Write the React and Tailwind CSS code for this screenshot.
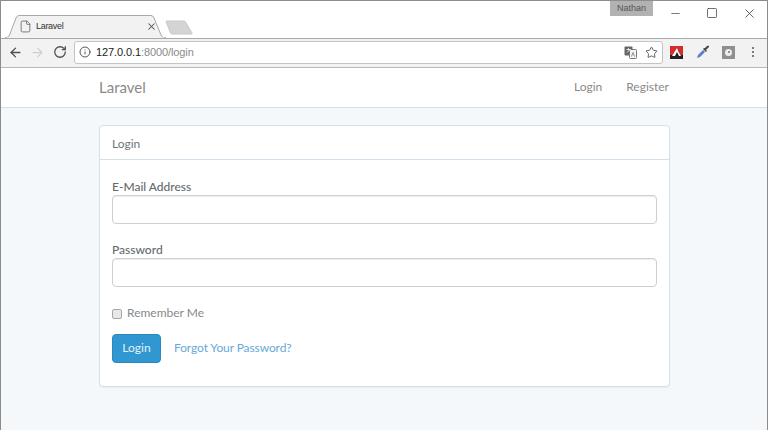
import React from 'react';
import { ArrowLeft, ArrowRight, RotateCw, Info, Star, X, Minus, Square, File } from 'lucide-react';

const font = "font-['Lato','Open_Sans',sans-serif]";

const TabStrip = () => (
  <div className="h-[37px] flex items-end relative bg-white">
    <div className="relative w-[161px] h-[23px] ml-[4px] flex items-center pl-[14px] pr-[9px]">
      <svg className="absolute left-0 top-0" width="161" height="23" viewBox="0 0 161 23" fill="none">
        <path d="M0 22.5 H2 Q3.5 22.5 4.5 20 L11 3 Q12 0.5 14 0.5 H146 Q148 0.5 149 3 L156 20 Q157 22.5 158.5 22.5 H161" fill="#f2f2f2" stroke="#a8a8a8" />
        <path d="M1 23 H160" stroke="#f2f2f2" />
      </svg>
      <File size={13} strokeWidth={1.5} className="relative text-[#5f6368]" />
      <span className="relative ml-[4px] text-[9px] tracking-[-0.3px] leading-none text-[#333] font-['Liberation_Sans',sans-serif]">Laravel</span>
      <X size={11} strokeWidth={2.2} className="relative ml-auto text-[#555]" />
    </div>
    <svg className="ml-[-1px] mb-[3px]" width="29" height="15" viewBox="0 0 29 15">
      <path d="M1 1.5 Q1 1 2 1 H19 Q20 1 20.5 2 L27 13 Q27.5 14 26.5 14 H7 Q6 14 5.5 13 Z" fill="#d4d4d4" stroke="#c8c8c8" />
    </svg>
    <div className="absolute right-[114px] top-0 w-[43px] h-[15px] bg-[#b2b2b2] text-[9px] leading-[15px] text-center text-[#555] font-['Liberation_Sans',sans-serif]">Nathan</div>
    <div className="absolute right-0 top-0 h-[24px] flex items-center text-[#333]">
      <div className="w-[36px] flex justify-center"><Minus size={13} strokeWidth={1.2} /></div>
      <div className="w-[38px] flex justify-center"><Square size={12} strokeWidth={1.4} /></div>
      <div className="w-[36px] flex justify-center"><X size={15} strokeWidth={1.2} /></div>
    </div>
  </div>
);

const Toolbar = () => (
  <div className="h-[30px] bg-[#f2f2f2] border-t border-[#a8a8a8] border-b-[1px] border-b-[#b9b9b9] flex items-center pl-[7px] pr-[10px] pb-[2px]">
    <ArrowLeft size={15} strokeWidth={2.2} className="text-[#4f4f4f]" />
    <ArrowRight size={15} strokeWidth={2} className="ml-[7px] text-[#cfcfcf]" />
    <RotateCw size={14} strokeWidth={2.2} className="ml-[8px] text-[#4f4f4f]" />
    <div className="ml-[7px] w-[589px] h-[23px] bg-white border border-[#c4c4c4] rounded-[3px] flex items-center pl-[4px] pr-[4px]">
      <Info size={12} strokeWidth={1.8} className="text-[#444]" />
      <span className="ml-[5px] text-[11px] tracking-[-0.1px] leading-none font-['Liberation_Sans',sans-serif] text-[#222]">127.0.0.1<span className="text-[#8a8a8a]">:8000/login</span></span>
      <svg className="ml-auto" width="13" height="13" viewBox="0 0 13 13">
        <rect x="0.5" y="0.5" width="8" height="9" rx="1" fill="#666" />
        <rect x="5.5" y="3.5" width="7" height="9" rx="1" fill="#f4f4f4" stroke="#777" />
        <path d="M2.5 3.5h4M4.5 2v1.5M3 6.5l3-3" stroke="#fff" strokeWidth="0.8" fill="none" />
        <path d="M7.5 10.5l1.5-4 1.5 4" stroke="#777" fill="none" strokeWidth="0.8" />
      </svg>
      <Star size={13} strokeWidth={1.7} className="ml-[8px] text-[#555]" />
    </div>
    <svg className="ml-[7px]" width="13" height="13" viewBox="0 0 13 13">
      <rect width="13" height="13" fill="#d32c2c" />
      <rect y="9" width="13" height="4" fill="#222" />
      <path d="M2 10 L7 2 L8.5 6 L11 10 Z" fill="#fff" />
      <path d="M5 10 L7 6 L9 10 Z" fill="#222" />
    </svg>
    <svg className="ml-[13px]" width="14" height="14" viewBox="0 0 14 14">
      <path d="M1 13 L2 10 L7 5 L9 7 L4 12 Z" fill="#5a7fd0" />
      <path d="M7 4 L10 7 L11 6 L10 5 L13 2 Q13.5 1 12.5 0.7 Q12 0.4 11 1 L9 3 L8 3 Z" fill="#4a4a4a" />
    </svg>
    <div className="ml-[12px] w-[13px] h-[13px] bg-[#8f8f8f] flex items-center justify-center">
      <div className="w-[7px] h-[7px] rounded-full bg-[#eee] flex items-center justify-center">
        <div className="w-[2px] h-[2px] rounded-full bg-[#777]" />
      </div>
    </div>
    <div className="ml-[17px] flex flex-col gap-[2px]">
      <div className="w-[2px] h-[2px] rounded-full bg-[#555]" />
      <div className="w-[2px] h-[2px] rounded-full bg-[#555]" />
      <div className="w-[2px] h-[2px] rounded-full bg-[#555]" />
    </div>
  </div>
);

const Navbar = () => (
  <nav className="h-[40px] bg-white border-b border-[#d3e0e9] pl-[98px] pr-[98px] flex items-center">
    <span className="text-[15px] text-[#8a8a8a]">Laravel</span>
    <a className="ml-auto mb-[2px] text-[12px] text-[#8a8a8a]">Login</a>
    <a className="ml-[24px] mb-[2px] text-[12px] text-[#8a8a8a]">Register</a>
  </nav>
);

const Field = ({ label, type }) => (
  <div>
    <label className="block text-[12px] leading-[17px] font-medium text-[#636b6f]">{label}</label>
    <input type={type} className="block w-[545px] h-[29px] bg-white border border-[#ccd0d2] rounded-[4px] shadow-[inset_0_1px_1px_rgba(0,0,0,0.075)]" />
  </div>
);

export default function App() {
  return (
    <div className={`w-[768px] h-[430px] overflow-hidden bg-[#f5f8fa] border-x border-[#8c8c8c] ${font}`}>
      <div className="border-t border-[#8c8c8c]">
        <TabStrip />
        <Toolbar />
      </div>
      <Navbar />
      <main className="pt-[17px] pl-[98px]">
        <div className="w-[571px] h-[262px] bg-white border border-[#d3e0e9] rounded-[4px] shadow-[0_1px_1px_rgba(0,0,0,0.05)]">
          <div className="h-[34px] pt-[3px] border-b border-[#d3e0e9] px-[12px] flex items-center text-[12px] text-[#6f767a]">Login</div>
          <div className="pt-[18px] px-[12px]">
            <Field label="E-Mail Address" type="email" />
            <div className="mt-[17px]">
              <Field label="Password" type="password" />
            </div>
            <div className="mt-[18px] flex items-center h-[18px]">
              <span className="w-[10px] h-[10px] bg-[#e8e8e8] border border-[#a8a8a8] rounded-[2px]" />
              <span className="ml-[5px] mb-[2px] text-[12px] text-[#85898d]">Remember Me</span>
            </div>
            <div className="mt-[11px] flex items-center">
              <button className="w-[49px] h-[29px] pb-[2px] bg-[#3097d1] border border-[#2a88bd] rounded-[4px] text-[12px] text-[#e4f2fa]">Login</button>
              <a className="ml-[13px] mb-[2px] text-[12px] tracking-[-0.1px] text-[#69a8d8]">Forgot Your Password?</a>
            </div>
          </div>
        </div>
      </main>
    </div>
  );
}
